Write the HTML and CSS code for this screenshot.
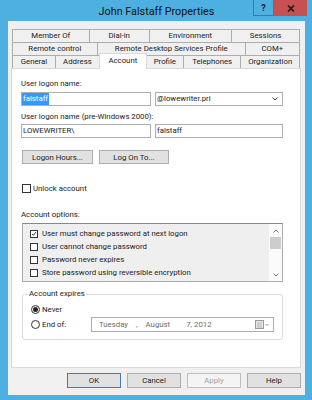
FILE: index.html
```html
<!DOCTYPE html>
<html>
<head>
<meta charset="utf-8">
<link rel="stylesheet" href="styles.css">
</head>
<body>
<div class="window">
  <div class="titlebar">
    <div class="title">John Falstaff Properties</div>
    <div class="cbtns">
      <div class="cbtn help">?</div>
      <div class="cbtn close"><svg width="8" height="7" viewBox="0 0 8 7"><path d="M1 0.5 L7 6.5 M7 0.5 L1 6.5" stroke="#2a1a1a" stroke-width="1.7" fill="none"/></svg></div>
    </div>
  </div>
  <div class="client">
    <div class="tabs">
      <div class="tabrow">
        <div class="tab w77">Member Of</div>
        <div class="tab w60">Dial-in</div>
        <div class="tab w83">Environment</div>
        <div class="tab w68">Sessions</div>
      </div>
      <div class="tabrow">
        <div class="tab w85">Remote control</div>
        <div class="tab w149">Remote Desktop Services Profile</div>
        <div class="tab w54">COM+</div>
      </div>
      <div class="tabrow">
        <div class="tab w43">General</div>
        <div class="tab w44">Address</div>
        <div class="tab w47 active">Account</div>
        <div class="tab w37">Profile</div>
        <div class="tab w58">Telephones</div>
        <div class="tab w59">Organization</div>
      </div>
    </div>
    <div class="panel">
      <div class="label">User logon name:</div>
      <div class="inrow first">
        <div class="input"><span class="sel">falstaff</span></div>
        <div class="input combo"><span>@lowewriter.pri</span><svg class="chev" width="6" height="4" viewBox="0 0 6 4"><path d="M0.5 0.5 L3 3 L5.5 0.5" stroke="#333" stroke-width="1" fill="none"/></svg></div>
      </div>
      <div class="label second">User logon name (pre-Windows 2000):</div>
      <div class="inrow">
        <div class="input">LOWEWRITER\</div>
        <div class="input">falstaff</div>
      </div>
      <div class="btnrow">
        <div class="btn b71">Logon Hours...</div>
        <div class="btn b70">Log On To...</div>
      </div>
      <div class="checkrow">
        <span class="cb"></span><span>Unlock account</span>
      </div>
      <div class="label options">Account options:</div>
      <div class="listbox">
        <div class="items">
          <div class="item"><span class="cb small"><svg width="8" height="8" viewBox="0 0 8 8"><path d="M1.5 4 L3.2 5.8 L6.5 1.5" stroke="#222" stroke-width="1.2" fill="none"/></svg></span><span>User must change password at next logon</span></div>
          <div class="item"><span class="cb small"></span><span>User cannot change password</span></div>
          <div class="item"><span class="cb small"></span><span>Password never expires</span></div>
          <div class="item"><span class="cb small"></span><span>Store password using reversible encryption</span></div>
        </div>
        <div class="scrollbar">
          <div class="sb-btn"><svg width="6" height="4" viewBox="0 0 6 4"><path d="M0.5 3.5 L3 1 L5.5 3.5" stroke="#777" stroke-width="1" fill="none"/></svg></div>
          <div class="sb-thumb"></div>
          <div class="sb-track"></div>
          <div class="sb-btn"><svg width="6" height="4" viewBox="0 0 6 4"><path d="M0.5 0.5 L3 3 L5.5 0.5" stroke="#777" stroke-width="1" fill="none"/></svg></div>
        </div>
      </div>
      <fieldset class="group">
        <legend>Account expires</legend>
        <div class="radiorow never"><span class="radio on"></span><span>Never</span></div>
        <div class="radiorow endof">
          <div class="radiolabel"><span class="radio"></span><span>End of:</span></div>
          <div class="picker">
            <span class="d-day">Tuesday</span><span class="d-comma">,</span><span class="d-month">August</span><span class="d-rest">7, 2012</span>
            <span class="cal"><svg width="14" height="9" viewBox="0 0 14 9"><rect x="0.5" y="0.5" width="8" height="8" fill="#e8e8e8" stroke="#9a9a9a"/><path d="M2 3 H7 M2 5 H7 M2 7 H7" stroke="#b5b5b5" stroke-width="1"/><path d="M10.5 4 L12 5.5 L13.5 4" stroke="#9a9a9a" fill="none"/></svg></span>
          </div>
        </div>
      </fieldset>
    </div>
    <div class="footer">
      <div class="btn fb default">OK</div>
      <div class="btn fb">Cancel</div>
      <div class="btn fb disabled">Apply</div>
      <div class="btn fb">Help</div>
    </div>
  </div>
</div>
</body>
</html>
```
FILE: styles.css
```css
* { box-sizing: border-box; }
html, body { margin: 0; padding: 0; }
body {
  width: 312px;
  height: 400px;
  overflow: hidden;
  font-family: Roboto, "Liberation Sans", sans-serif;
  font-size: 7.8px;
  color: #222;
  background: #4db0e1;
}
.window {
  height: 400px;
  background: #4db0e1;
  display: flex;
  flex-direction: column;
  padding: 0 7px 5px 8px;
}
.titlebar {
  height: 21px;
  display: grid;
  grid-template-columns: 1fr auto 1fr;
}
.title {
  grid-column: 2;
  font-size: 10.8px;
  line-height: 24px;
  color: #111;
}
.cbtns {
  grid-column: 3;
  justify-self: end;
  display: flex;
  margin-right: -2px;
}
.cbtn {
  height: 16px;
  display: flex;
  align-items: center;
  justify-content: center;
}
.help {
  width: 21px;
  border: 1px solid #2c7fb3;
  border-top: 0;
  font-weight: bold;
  font-size: 9px;
  color: #1a1a1a;
}
.close {
  width: 33px;
  background: #c75050;
}
.client {
  flex: 1;
  background: #f0f0f0;
  padding: 8px 4px 7px 3px;
  display: flex;
  flex-direction: column;
}
.tabs {
  margin: 0 1px;
  display: flex;
  flex-direction: column;
}
.tabrow {
  display: flex;
  height: 13px;
}
.tab {
  flex-basis: 0;
  min-width: 0;
  height: 13px;
  border: 1px solid #adadad;
  border-bottom: 0;
  margin-left: -1px;
  background: #f0f0f0;
  text-align: center;
  line-height: 12px;
  white-space: nowrap;
  color: #1b1b1b;
}
.tab:first-child { margin-left: 0; }
.w77 { flex-grow: 77; }
.w60 { flex-grow: 60; }
.w83 { flex-grow: 83; }
.w68 { flex-grow: 68; }
.w85 { flex-grow: 85; }
.w149 { flex-grow: 149; }
.w54 { flex-grow: 54; }
.w43 { flex-grow: 43; }
.w44 { flex-grow: 44; }
.w47 { flex-grow: 47; }
.w37 { flex-grow: 37; }
.w58 { flex-grow: 58; }
.w59 { flex-grow: 59; }
.tab.active {
  position: relative;
  z-index: 1;
  height: 16px;
  margin-top: -2px;
  background: #fff;
  border-color: #d9d9d9;
  line-height: 13px;
}
.panel {
  height: 300px;
  background: #fff;
  border: 1px solid #d9d9d9;
  padding: 9px 17px 0 9px;
}
.label {
  height: 12px;
  line-height: 12px;
  white-space: nowrap;
}
.label.second { margin-top: 5px; }
.label.options { margin-top: 14px; }
.inrow {
  display: grid;
  grid-template-columns: 130px 1fr;
  gap: 4px;
  margin-top: 1px;
}
.inrow.first { margin-top: 2px; }
.input {
  height: 14px;
  border: 1px solid #abadb3;
  background: #fff;
  padding: 0 1px;
  line-height: 12px;
  white-space: nowrap;
  display: flex;
  align-items: center;
}
.sel {
  background: #3399ff;
  color: #fff;
  line-height: 12px;
  padding: 0 1px;
  margin-left: -1px;
}
.combo { justify-content: space-between; padding-right: 4px; }
.btnrow {
  display: flex;
  gap: 6px;
  margin: 12px 0 0 1px;
}
.btn {
  height: 14px;
  background: #e1e1e1;
  border: 1px solid #adadad;
  display: flex;
  align-items: center;
  justify-content: center;
  white-space: nowrap;
}
.b71 { width: 71px; }
.b70 { width: 70px; }
.checkrow {
  height: 13px;
  margin: 18px 0 0 1px;
  display: flex;
  align-items: center;
  gap: 2px;
}
.cb {
  width: 9px;
  height: 9px;
  border: 1px solid #333;
  background: #fff;
  display: inline-flex;
  align-items: center;
  justify-content: center;
  flex: none;
}
.cb.small { width: 8px; height: 8px; }
.cb svg { display: block; }
.listbox {
  margin: 2px 0 0 1px;
  height: 59px;
  border: 1px solid #abadb3;
  border-top-color: #828790;
  background: #efefef;
  display: flex;
}
.items {
  flex: 1;
  padding: 3px 0 0 7px;
}
.item {
  height: 13px;
  display: flex;
  align-items: center;
  gap: 4px;
  white-space: nowrap;
}
.scrollbar {
  width: 13px;
  background: #fbfbfb;
  display: flex;
  flex-direction: column;
}
.sb-btn {
  height: 13px;
  display: flex;
  align-items: center;
  justify-content: center;
}
.sb-thumb {
  height: 12px;
  margin: 0 1px;
  background: #cdcdcd;
}
.sb-track { flex: 1; }
.group {
  margin: 6px 0 0 1px;
  padding: 0 8px 7px 5px;
  border: 1px solid #dcdcdc;
  border-radius: 3px;
  min-width: 0;
}
.group legend {
  padding: 0 1px;
  line-height: 12px;
  height: 12px;
}
.radiorow {
  display: flex;
  align-items: center;
  gap: 2px;
  padding-left: 3px;
}
.radiorow.never { height: 12px; margin-top: 3px; }
.radiorow.endof {
  margin-top: 2px;
  display: grid;
  grid-template-columns: 60px 1fr;
  gap: 0;
}
.radiolabel {
  display: flex;
  align-items: center;
  gap: 2px;
}
.radio {
  width: 9px;
  height: 9px;
  border: 1px solid #333;
  border-radius: 50%;
  background: #fff;
  flex: none;
  display: inline-flex;
  align-items: center;
  justify-content: center;
}
.radio.on::after {
  content: "";
  width: 5px;
  height: 5px;
  border-radius: 50%;
  background: #222;
}
.picker {
  height: 15px;
  border: 1px solid #acacac;
  background: #fff;
  color: #6d6d6d;
  display: flex;
  align-items: center;
  padding: 0 4px 0 7px;
  white-space: nowrap;
}
.d-comma { margin-left: 8px; }
.d-month { margin-left: 8px; }
.d-rest { margin-left: 16px; }
.cal { margin-left: auto; display: flex; }
.footer {
  margin-top: 5px;
  display: flex;
  justify-content: flex-end;
  gap: 6px;
}
.fb { width: 54px; height: 15px; }
.fb.default { border-color: #3c7fb1; }
.fb.disabled { background: #f4f4f4; border-color: #bfbfbf; color: #a3a3a3; }
```
